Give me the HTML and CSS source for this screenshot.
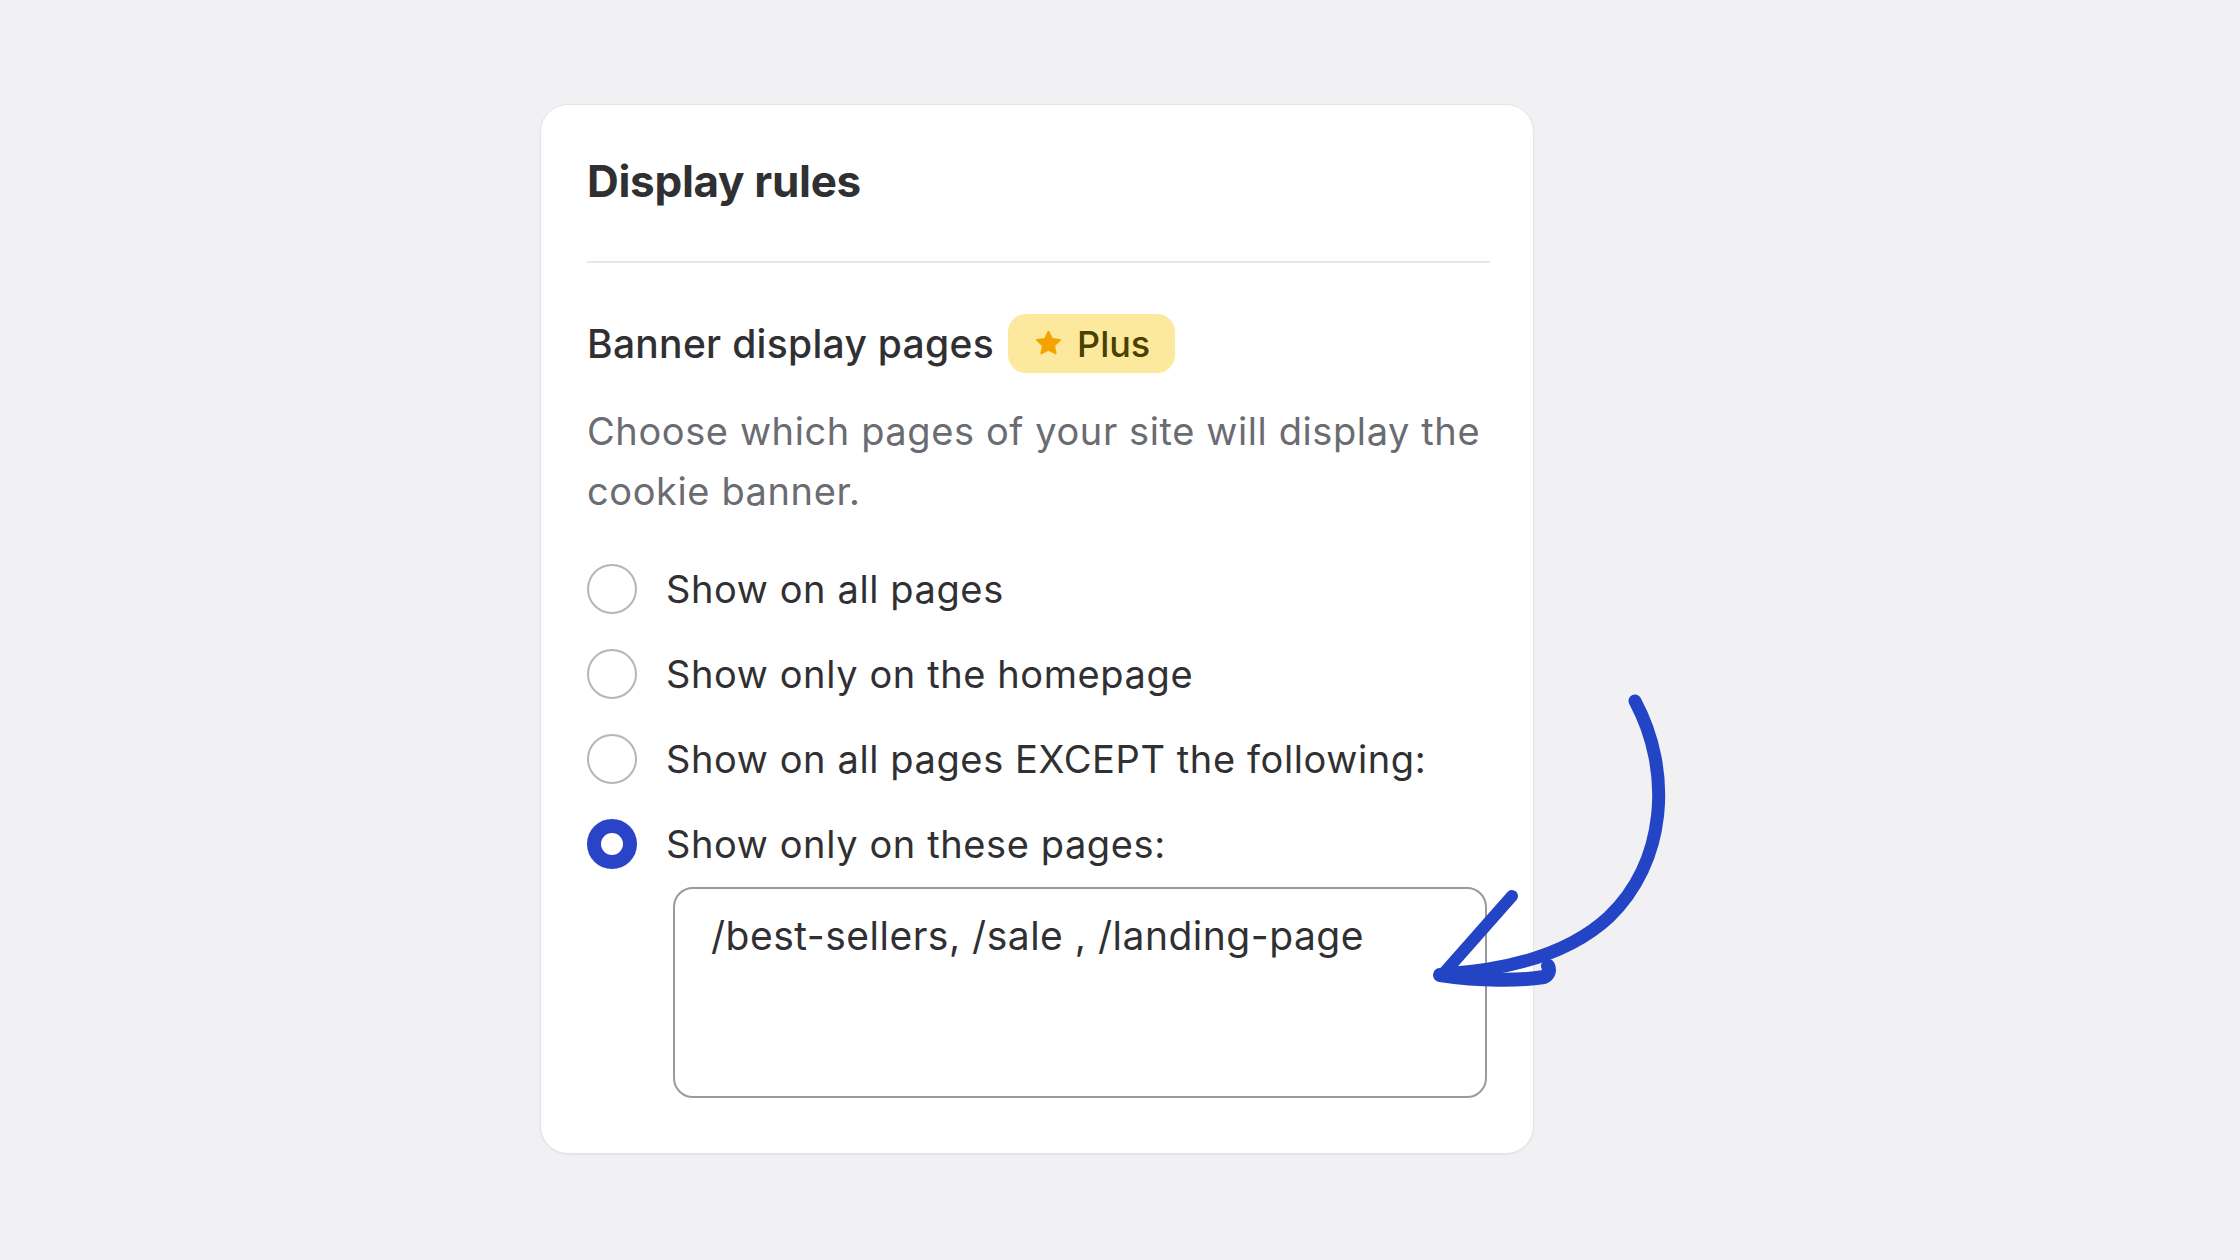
FILE: index.html
```html
<!DOCTYPE html>
<html lang="en">
<head>
	<meta charset="UTF-8">
	<title>Display rules</title>
	<link rel="stylesheet" href="styles.css">
</head>
<body>
	<div class="page">
		<div class="card">
			<h2 class="card-title">Display rules</h2>
			<div class="divider"></div>

			<div class="field-head">
				<span class="field-name">Banner display pages</span>
				<span class="badge">
					<svg class="badge-star" viewBox="0 0 24 24" width="29" height="29">
						<path d="M12 2.2l2.9 6.1 6.6.8-4.9 4.6 1.3 6.6L12 17l-5.9 3.3 1.3-6.6-4.9-4.6 6.6-.8z" fill="#f5a300" stroke="#f5a300" stroke-width="1.6" stroke-linejoin="round"/>
					</svg>
					Plus
				</span>
			</div>
			<p class="field-help">Choose which pages of your site will display the cookie banner.</p>

			<ul class="options">
				<li class="option"><span class="radio"></span><span class="option-label">Show on all pages</span></li>
				<li class="option"><span class="radio"></span><span class="option-label">Show only on the homepage</span></li>
				<li class="option"><span class="radio"></span><span class="option-label">Show on all pages EXCEPT the following:</span></li>
				<li class="option"><span class="radio checked"></span><span class="option-label">Show only on these pages:</span></li>
			</ul>
			<textarea class="pages-input" readonly>/best-sellers, /sale , /landing-page</textarea>
		</div>
	</div>

	<!-- hand drawn pointer -->
	<svg class="pointer" viewBox="0 0 260 320" width="260" height="320">
		<g fill="none" stroke="#2444c6" stroke-linecap="round" stroke-linejoin="round">
			<path d="M215 21 C253 92 246 182 189 237 C147 276 86 290 24 294" stroke-width="13"/>
			<path d="M24 293 L92 216" stroke-width="12"/>
			<path d="M20 295 C60 301 100 301 124 297 C129 295 130 290 128 286" stroke-width="14"/>
		</g>
	</svg>
</body>
</html>
```

FILE: styles.css
```css
* {
	margin: 0;
	padding: 0;
	box-sizing: border-box;
}
body {
	background-color: #f1f0f3;
	font-family: Inter, "Noto Sans", sans-serif;
	color: #303033;
	position: relative;
	min-height: 1260px;
}
.page {
	padding: 104px 0 0 540px;
}
.card {
	width: 994px;
	height: 1050px;
	background-color: #fff;
	border: 1px solid #e4e3e7;
	border-radius: 28px;
	box-shadow: 0 1px 2px rgba(0,0,0,0.06);
	padding: 50px 43px 0 46px;
}
.card-title {
	font-size: 44px;
	line-height: 52px;
	font-weight: 700;
	color: #303033;
	letter-spacing: -0.3px;
}
.divider {
	height: 2px;
	background-color: #e6e6e8;
	margin-top: 54px;
}
.field-head {
	display: flex;
	align-items: center;
	height: 59px;
	margin-top: 51px;
}
.field-name {
	font-size: 39px;
	font-weight: 500;
	letter-spacing: 0.3px;
}
.badge {
	display: flex;
	align-items: center;
	height: 59px;
	margin-left: 14px;
	padding: 0 25px 0 26px;
	border-radius: 18px;
	background-color: #fde99e;
	color: #4a4000;
	font-size: 36px;
	font-weight: 500;
	gap: 14px;
}
.badge-star {
	display: block;
}
.field-help {
	margin-top: 28px;
	font-size: 38px;
	line-height: 60px;
	color: #6b6b72;
	letter-spacing: 0.6px;
}
.options {
	list-style: none;
	margin-top: 25px;
}
.option {
	display: flex;
	align-items: center;
	height: 85px;
}
.radio {
	width: 50px;
	height: 50px;
	border-radius: 50%;
	border: 2px solid #b6b6b9;
	flex-shrink: 0;
}
.radio.checked {
	border: 14px solid #2a44c8;
}
.option-label {
	margin-left: 29px;
	font-size: 38px;
	letter-spacing: 0.6px;
	color: #303033;
}
.pages-input {
	display: block;
	width: 814px;
	height: 211px;
	margin: 1px 0 0 86px;
	padding: 17px 36px 0;
	border: 2px solid #9a9a9d;
	border-radius: 20px;
	font-family: Inter, "Noto Sans", sans-serif;
	font-size: 39px;
	line-height: 60px;
	letter-spacing: 0.5px;
	color: #303033;
	background-color: #fff;
	resize: none;
	outline: none;
}
.pointer {
	position: absolute;
	left: 1420px;
	top: 680px;
}
```
